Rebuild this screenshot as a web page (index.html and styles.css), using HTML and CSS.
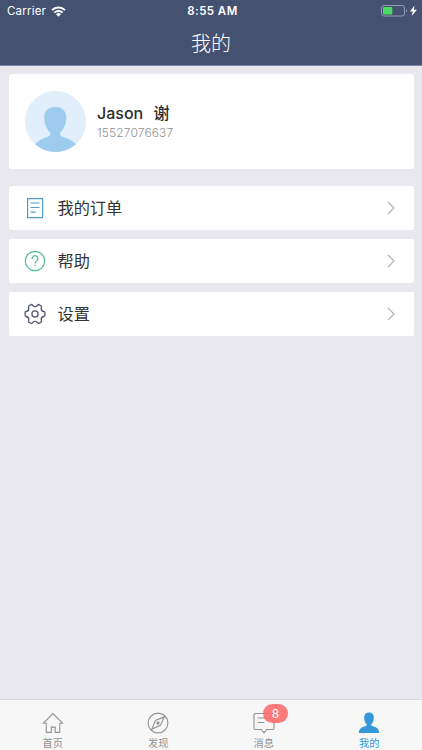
FILE: index.html
```html
<!DOCTYPE html>
<html lang="zh-CN">
  <head>
    <meta charset="UTF-8" />
    <meta name="viewport" content="width=device-width, initial-scale=1.0" />
    <title>我的</title>
    <link rel="stylesheet" href="styles.css">
  </head>
  <body>
    <header class="header">
      <div class="status-bar">
        <div class="status-left">
          <span class="carrier">Carrier</span>
          <svg class="wifi" width="15" height="11" viewBox="0 0 15 11" fill="none" stroke="#fff" stroke-width="2">
            <path d="M1 4.1a9.2 9.2 0 0 1 13 0M3.3 6.6a6 6 0 0 1 8.4 0" />
            <path d="M5 8.2a3.6 3.6 0 0 1 5 0L7.5 10.8z" fill="#fff" stroke="none" />
          </svg>
        </div>
        <div class="status-time">8:55 AM</div>
        <div class="status-right">
          <svg width="37" height="12" viewBox="0 0 37 12">
            <rect x=".5" y=".5" width="23" height="10.5" rx="2.5" fill="none" stroke="#929ab0" />
            <rect x="2" y="2" width="9.3" height="7.5" rx="1" fill="#4cd964" />
            <path d="M25 4c1.3.5 1.3 3 0 3.5z" fill="#929ab0" />
            <path d="M33.5 .5L29 6.500h2.800L30.600 11 36 4.800h-3.200z" fill="#fff" />
          </svg>
        </div>
      </div>
      <h1 class="title">我的</h1>
    </header>

    <main class="content">
      <section class="profile">
        <svg class="avatar" width="61" height="61" viewBox="0 0 61 61">
          <circle cx="30.5" cy="30.5" r="30.5" fill="#e0effb" />
          <path d="M30.2 16C22.5 16 19 20.5 19.3 27.5C19.5 34 22 38.2 25 41.5C26.3 43.5 24.5 45 22.5 46C17.5 47.6 13.3 49.5 10.2 53.2A30.5 30.5 0 0 0 50.8 53.2C47.5 49.5 43 47.6 38 46C35.7 45 34.3 43.5 35.5 41.5C38.5 38.2 41 34 41.2 27.5C41.4 20.5 38 16 30.2 16Z" fill="#9dccee" />
        </svg>
        <div class="profile-info">
          <div class="profile-name">Jason <span class="surname">谢</span></div>
          <div class="profile-phone">15527076637</div>
        </div>
      </section>

      <nav class="menu">
        <a class="menu-item" href="#">
          <svg class="menu-icon" width="22" height="22" viewBox="0 0 22 22" fill="none" stroke="#519bd0" stroke-width="1.2">
            <path d="M3.6 1.6h15v19h-15zM6.5 6h9M6.5 10.5h9M6.5 15.2h5" />
          </svg>
          <span class="menu-label">我的订单</span>
          <svg class="arrow" width="8" height="14" viewBox="0 0 8 14"><path d="M1 1l6 6-6 6" /></svg>
        </a>
        <a class="menu-item" href="#">
          <svg class="menu-icon" width="22" height="22" viewBox="0 0 22 22" fill="none" stroke="#4bbd8b" stroke-width="1.2">
            <circle cx="11" cy="11" r="9.7" />
            <path d="M8.1 9.1V8.8a2.9 2.9 0 1 1 4.7 2.1Q11 12.1 11 13.5M11 14.8v1.4" />
          </svg>
          <span class="menu-label">帮助</span>
          <svg class="arrow" width="8" height="14" viewBox="0 0 8 14"><path d="M1 1l6 6-6 6" /></svg>
        </a>
        <a class="menu-item" href="#">
          <svg class="menu-icon" width="22" height="22" viewBox="0 0 22 22" fill="none" stroke="#505977" stroke-width="1.3" stroke-linejoin="round">
            <path d="M7.2 1.5Q8.2 1.5 8.7 2.500Q11 4.700 13.300 2.500Q13.800 1.500 14.800 1.500L17.400 3.100Q17.900 3.800 17.200 5Q16.800 7.900 19.700 8.500Q20.900 8.700 20.900 9.700V12.300Q20.900 13.300 19.700 13.500Q16.800 14.100 17.200 17Q17.900 18.200 17.400 18.900L14.800 20.500Q13.800 20.500 13.300 19.500Q11 17.300 8.700 19.500Q8.200 20.500 7.200 20.500L4.600 18.900Q4.100 18.200 4.800 17Q5.200 14.100 2.300 13.500Q1.100 13.300 1.100 12.300V9.700Q1.100 8.700 2.300 8.500Q5.200 7.900 4.800 5Q4.100 3.800 4.600 3.100Z" />
            <circle cx="11" cy="11" r="3.1" />
          </svg>
          <span class="menu-label">设置</span>
          <svg class="arrow" width="8" height="14" viewBox="0 0 8 14"><path d="M1 1l6 6-6 6" /></svg>
        </a>
      </nav>
    </main>

    <footer class="tab-bar">
      <a class="tab" href="#">
        <svg class="tab-icon" width="22" height="22" viewBox="0 0 22 22">
          <path d="M1.5 11.200L11 1.6l9.5 9.6h-2.700v9.200h-4.600v-5.300H9.300v5.300H4.300v-9.200z" />
        </svg>
        <span>首页</span>
      </a>
      <a class="tab" href="#">
        <svg class="tab-icon" width="22" height="22" viewBox="0 0 22 22">
          <circle cx="11" cy="11" r="9.9" />
          <path d="M17.2 4.9L13.4 13.3 4.8 17.1 8.4 8.5z" />
          <circle cx="11" cy="11" r="1.1" fill="#929292" />
        </svg>
        <span>发现</span>
      </a>
      <a class="tab" href="#">
        <svg class="tab-icon" width="22" height="22" viewBox="0 0 22 22">
          <path d="M2.5 1.500h17a1.500 1.500 0 0 1 1.500 1.500v13a1.500 1.500 0 0 1-1.500 1.500H13.500L11 21 8.500 17.500H2.500A1.500 1.500 0 0 1 1 16V3a1.500 1.500 0 0 1 1.500-1.500zM4.500 6h12M4.500 10.500h7" />
        </svg>
        <span>消息</span>
        <b class="badge">8</b>
      </a>
      <a class="tab active" href="#">
        <svg class="tab-icon" width="22" height="22" viewBox="0 0 22 22">
          <path d="M11 .5C7.600 .5 6 2.800 6.200 6.200C6.300 8.800 7.200 10.800 8.700 12.200C9 13.300 8.500 13.700 7 14.200C3.300 15.300.8 17 .8 21H21.200C21.200 17 18.700 15.300 15 14.200C13.500 13.700 13 13.300 13.300 12.200C14.800 10.800 15.700 8.800 15.800 6.200C16 2.800 14.400 .5 11 .5Z" />
        </svg>
        <span>我的</span>
      </a>
    </footer>
  </body>
</html>
```
FILE: styles.css
```css
* {
  box-sizing: border-box;
}
body {
  display: flex;
  flex-direction: column;
  height: 100vh;
  margin: 0;
  overflow: hidden;
  background: #e9e8ee;
  color: #333;
  font-family: Inter, "Noto Sans CJK SC", sans-serif;
}
a {
  color: inherit;
  text-decoration: none;
}
svg {
  display: block;
  flex-shrink: 0;
}

/* Header */
.header {
  height: 66px;
  background: #455170;
  border-bottom: 1px solid #828ba6;
  color: #fff;
}
.status-bar {
  display: grid;
  grid-template-columns: 1fr auto 1fr;
  align-items: center;
  height: 22px;
  padding: 0 4px 0 7px;
}
.status-left {
  display: flex;
  align-items: center;
  gap: 5px;
}
.carrier {
  font-size: 11.5px;
  letter-spacing: 0.2px;
}
.status-time {
  font-size: 11.5px;
  font-weight: 600;
  letter-spacing: 0.45px;
}
.status-right {
  display: flex;
  justify-content: flex-end;
}
.title {
  margin: 0;
  padding-top: 1px;
  font-size: 20px;
  font-weight: 300;
  line-height: 43px;
  text-align: center;
}

/* Profile card */
.content {
  flex: 1;
  padding: 8px 8.5px 0;
}
.profile {
  display: flex;
  align-items: center;
  gap: 11px;
  height: 95px;
  padding-left: 16.5px;
  border-radius: 3px;
  background: #fff;
}
.profile-name {
  color: #2b2b2b;
  font-size: 16px;
  font-weight: 500;
  line-height: 22px;
}
.surname {
  margin-left: 6px;
}
.profile-phone {
  color: #919191;
  font-size: 12px;
  font-weight: 300;
  letter-spacing: 0.12px;
  line-height: 18px;
}

/* Menu */
.menu {
  display: flex;
  flex-direction: column;
  gap: 9px;
  margin-top: 17px;
}
.menu-item {
  display: flex;
  align-items: center;
  height: 44px;
  padding: 0 19px 0 15.5px;
  border-radius: 2px;
  background: #fff;
}
.menu-label {
  flex: 1;
  margin-left: 11.5px;
  font-size: 16.2px;
  line-height: 24px;
}
.arrow {
  fill: none;
  stroke: #b4b4b4;
  stroke-width: 1.2;
}

/* Tab bar */
.tab-bar {
  display: flex;
  height: 51px;
  border-top: 1px solid #d8d6e0;
  background: #f7f7f7;
}
.tab {
  position: relative;
  display: flex;
  flex: 1;
  flex-direction: column;
  align-items: center;
  padding-top: 12px;
  color: #929292;
  font-size: 10.2px;
  line-height: 18px;
}
.tab-icon {
  fill: none;
  stroke: #929292;
  stroke-width: 1.1;
}
.active {
  color: #3498db;
}
.active .tab-icon {
  fill: #3498db;
  stroke: none;
}
.badge {
  position: absolute;
  top: 4px;
  left: 52px;
  width: 25px;
  height: 19px;
  border-radius: 9.5px;
  background: rgba(255, 104, 104, 0.87);
  color: #fff;
  font-size: 12px;
  font-weight: 400;
  line-height: 19px;
  text-align: center;
}
```
